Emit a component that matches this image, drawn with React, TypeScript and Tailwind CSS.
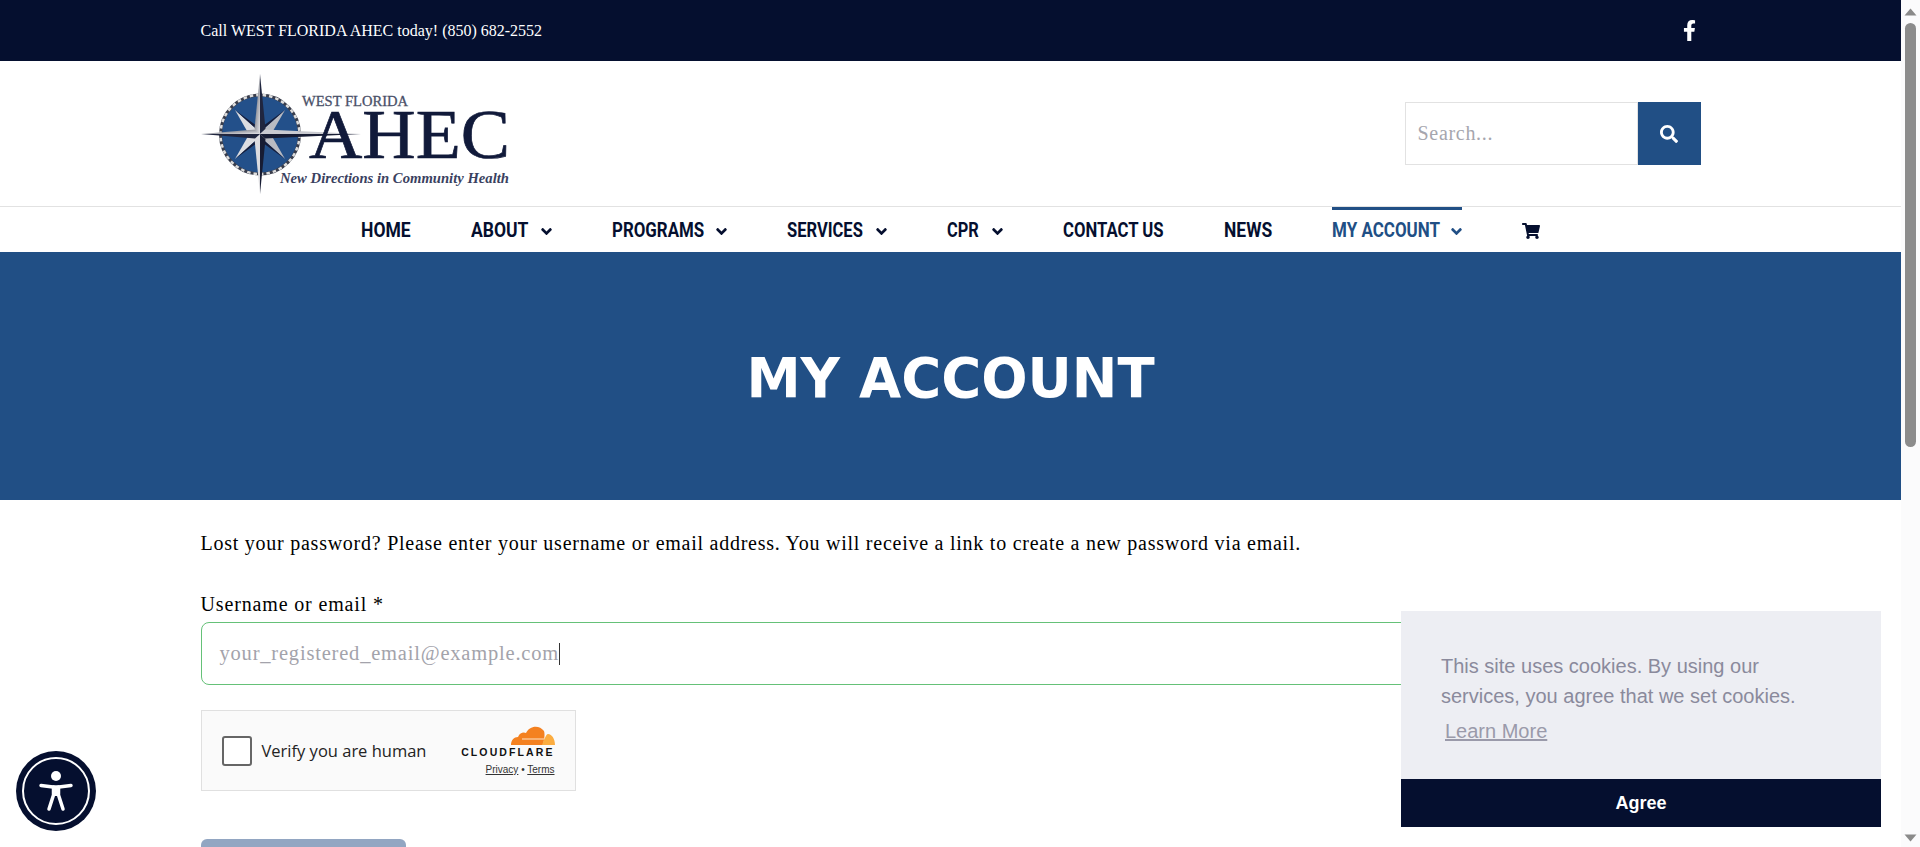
import { FaAngleDown, FaFacebookF, FaSearch, FaShoppingCart } from "react-icons/fa";

const serif = "font-['Liberation_Serif',serif]";

// Roboto is squeezed per label to get the tall narrow look of the menu font
const navItems = [
  { label: "HOME", box: "w-[50px]", squeeze: "scale-x-[0.835]" },
  { label: "ABOUT", box: "w-[58px]", squeeze: "scale-x-[0.835]", arrow: true },
  { label: "PROGRAMS", box: "w-[92px]", squeeze: "scale-x-[0.804]", arrow: true },
  { label: "SERVICES", box: "w-[77px]", squeeze: "scale-x-[0.787]", arrow: true },
  { label: "CPR", box: "w-[33px]", squeeze: "scale-x-[0.78]", arrow: true },
  { label: "CONTACT US", box: "w-[101px]", squeeze: "scale-x-[0.795]" },
  { label: "NEWS", box: "w-[48px]", squeeze: "scale-x-[0.831]" },
  { label: "MY ACCOUNT", box: "w-[107px]", squeeze: "scale-x-[0.809]", arrow: true, active: true },
];

const Logo = () => (
  <svg width="312" height="122" viewBox="201 74 312 122" className="overflow-visible" aria-label="West Florida AHEC">
    <defs>
      <linearGradient id="silver" x1="0" y1="0" x2="1" y2="1">
        <stop offset="0" stopColor="#f4f4f6" />
        <stop offset="0.5" stopColor="#9a9ca4" />
        <stop offset="1" stopColor="#e4e4e8" />
      </linearGradient>
    </defs>
    <circle cx="260" cy="134.500" r="39.500" fill="#23508a" />
    <circle cx="260" cy="134.500" r="39.500" fill="none" stroke="#3a3e4c" strokeWidth="3" />
    <circle cx="260" cy="134.500" r="39.500" fill="none" stroke="#dedede" strokeWidth="2.500" strokeDasharray="3.500 3" />
    <g>
      <polygon points="235,110 262,134 251,138" fill="#dcdde1" />
      <polygon points="235,110 262,134 257,126" fill="#161c38" />
      <polygon points="285,110 258,134 269,138" fill="#b9bbc2" />
      <polygon points="285,110 258,134 263,126" fill="#161c38" />
      <polygon points="235,159 262,135 251,131" fill="#dcdde1" />
      <polygon points="235,159 262,135 257,143" fill="#161c38" />
      <polygon points="285,159 258,135 269,131" fill="#b9bbc2" />
      <polygon points="285,159 258,135 263,143" fill="#161c38" />
    </g>
    <polygon points="260,74 265.500,129 260,134" fill="#20263f" />
    <polygon points="260,74 254.500,129 260,134" fill="url(#silver)" />
    <polygon points="260,194 254.500,139 260,134" fill="#dcdce0" />
    <polygon points="260,194 265.500,139 260,134" fill="#171c33" />
    <polygon points="201,134 255,129.500 260,134" fill="url(#silver)" />
    <polygon points="201,134 255,138.500 260,134" fill="#20263f" />
    <polygon points="361,134 265,129.500 260,134" fill="#c9cad0" />
    <polygon points="361,134 265,138.500 260,134" fill="#171c33" />
    <text x="302" y="105.500" fontFamily="Liberation Serif, serif" fontSize="14.500" fill="#4a5068" stroke="#4a5068" strokeWidth="0.300" textLength="106" lengthAdjust="spacingAndGlyphs">
      WEST FLORIDA
    </text>
    <text x="309" y="158" fontFamily="Liberation Serif, serif" fontSize="70" fill="#111a3a" stroke="#111a3a" strokeWidth="0.700" textLength="201" lengthAdjust="spacingAndGlyphs">
      AHEC
    </text>
    <text x="280" y="183" fontFamily="Liberation Serif, serif" fontSize="15" fontStyle="italic" fontWeight="700" fill="#3a4160" textLength="229" lengthAdjust="spacingAndGlyphs">
      New Directions in Community Health
    </text>
  </svg>
);

const CloudflareMark = () => (
  <svg width="44" height="21" viewBox="0 0 44 21" aria-hidden="true">
    <path d="M0 20 C0 15 3 12 7 12 C9 7 13 7 15 8 C18 1 28 -1 33 6 C34 9 33.500 13 32 20 Z" fill="#f48120" />
    <path d="M31 20 C33 15 35 9 37 9 C41 9 44 14 44 20 Z" fill="#fbad41" />
    <path d="M11 14 H33" stroke="#fde3c8" strokeWidth="1" />
  </svg>
);

const AccessibilityButton = () => (
  <div className="absolute left-[16px] top-[751px] flex h-20 w-20 items-center justify-center rounded-full bg-[#050f2f]">
    <div className="flex h-[68px] w-[68px] items-center justify-center rounded-full border-2 border-white">
      <svg width="36" height="44" viewBox="0 0 36 44" fill="none" aria-hidden="true">
        <circle cx="18" cy="7" r="5" fill="white" />
        <path d="M3 16.500 L15 18 H21 L33 16.500" stroke="white" strokeWidth="3.500" strokeLinecap="round" strokeLinejoin="round" />
        <path d="M15.500 18 V26 L11 40 M20.500 18 V26 L25 40" stroke="white" strokeWidth="3.500" strokeLinecap="round" strokeLinejoin="round" />
        <path d="M15 17 H21 V27 H15 Z" fill="white" />
      </svg>
    </div>
  </div>
);

const CookieNotice = () => (
  <div className="absolute left-[1401px] top-[611px] w-[480px] font-['Liberation_Sans',sans-serif]">
    <div className="h-[168px] bg-[#edeef3] px-10 pt-[40px] text-[20px] leading-[30px] text-[#8a8a9c]">
      <p>
        This site uses cookies. By using our
        <br />
        services, you agree that we set cookies.
      </p>
      <a href="#" className="mt-[5px] ml-1 inline-block text-[#9a9aaa] underline">
        Learn More
      </a>
    </div>
    <button className="flex h-12 w-full items-center justify-center bg-[#050f2f] text-[18px] font-bold text-white">
      Agree
    </button>
  </div>
);

const Scrollbar = () => (
  <div className="flex h-[847px] w-[19px] shrink-0 flex-col items-center bg-[#fbfbfc]">
    <svg width="13" height="8" viewBox="0 0 13 8" className="mt-[8px]" aria-hidden="true">
      <path d="M6.500 0.500 L12.500 7.500 H0.500 Z" fill="#8a8a8a" />
    </svg>
    <div className="mt-[7px] h-[424px] w-[11px] rounded-full bg-[#8c8c8c]" />
    <svg width="13" height="8" viewBox="0 0 13 8" className="mt-auto mb-[5px]" aria-hidden="true">
      <path d="M6.500 7.500 L12.500 0.500 H0.500 Z" fill="#8a8a8a" />
    </svg>
  </div>
);

export default function App() {
  return (
    <div className={`relative flex h-[847px] w-[1920px] overflow-hidden bg-white ${serif}`}>
      <main className="w-[1901px] shrink-0">
        <div className="h-[61px] bg-[#050f2f] text-white">
          <div className="mx-auto flex h-full w-[1500px] items-center justify-between">
            <span className="text-[16px]">Call WEST FLORIDA AHEC today! (850) 682-2552</span>
            <FaFacebookF className="mr-[5px] h-[21px] w-[13px]" />
          </div>
        </div>

        <header className="mx-auto flex h-[145px] w-[1500px] items-start justify-between">
          <div className="mt-[13px]">
            <Logo />
          </div>
          <div className="mt-[41px] flex h-[63px]">
            <input
              placeholder="Search..."
              className="h-full w-[233px] border border-[#e2e2e2] px-3 text-[20px] tracking-[0.7px] placeholder:text-[#a6a6ae]"
            />
            <button className="flex h-full w-[63px] items-center justify-center bg-[#214f85] text-white">
              <FaSearch className="h-[18px] w-[18px]" />
            </button>
          </div>
        </header>

        <nav className="h-[46px] border-t border-[#e2e2e2] font-['Roboto',sans-serif] text-[#050f2f]">
          <ul className="flex h-full items-stretch justify-center gap-[60px] text-[21px] font-bold">
            {navItems.map((item) => (
              <li
                key={item.label}
                className={`flex items-center gap-[12px] border-t-[3px] ${item.active ? "border-[#214f85] text-[#214f85]" : "border-transparent"}`}
              >
                <span className={`block ${item.box}`}>
                  <span className={`block origin-left whitespace-nowrap ${item.squeeze}`}>{item.label}</span>
                </span>
                {item.arrow && <FaAngleDown className="h-[17px] w-[11px]" />}
              </li>
            ))}
            <li className="flex items-center border-t-[3px] border-transparent">
              <FaShoppingCart className="h-[16px] w-[18px]" />
            </li>
          </ul>
        </nav>

        <section className="flex h-[248px] items-center justify-center bg-[#214f85] pt-[4px]">
          <h1 className="font-['DejaVu_Sans',sans-serif] text-[54.500px] leading-none font-bold text-white">MY ACCOUNT</h1>
        </section>

        <div className="mx-auto w-[1500px] pt-[31px] text-black">
          <p className="text-[20px] leading-[24px] tracking-[0.75px]">
            Lost your password? Please enter your username or email address. You will receive a link to create a new
            password via email.
          </p>
          <label className="mt-[37px] block text-[20px] leading-[24px] tracking-[0.85px]">Username or email *</label>
          <div className="mt-[6px] flex h-[63px] items-center rounded-[8px] border border-[#65c178] px-[18px] text-[20.500px] tracking-[0.8px] text-[#a3a3ab]">
            your_registered_email@example.com
            <span className="h-[22px] w-px bg-[#333333]" />
          </div>

          <div className="mt-[25px] flex h-[81px] w-[375px] items-center justify-between border border-[#e0e0e0] bg-[#fafafa] px-[20px]">
            <div className="flex items-center gap-[10px]">
              <span className="h-[30px] w-[30px] rounded-[3px] border-2 border-[#666666] bg-white" />
              <span className="pt-[2px] font-['Open_Sans',sans-serif] text-[16.500px] text-[#232323]">Verify you are human</span>
            </div>
            <div className="flex flex-col items-end font-['Liberation_Sans',sans-serif] text-[#111111]">
              <CloudflareMark />
              <span className="mt-[1px] text-[10.500px] leading-[11px] font-bold tracking-[2.100px]">CLOUDFLARE</span>
              <span className="mt-[6px] text-[10px] leading-[12px] text-[#333333]">
                <span className="underline">Privacy</span> &bull; <span className="underline">Terms</span>
              </span>
            </div>
          </div>

          <div className="mt-[48px] h-[40px] w-[205px] rounded-[6px] bg-[#92a6c2]" />
        </div>
      </main>

      <Scrollbar />
      <AccessibilityButton />
      <CookieNotice />
    </div>
  );
}
